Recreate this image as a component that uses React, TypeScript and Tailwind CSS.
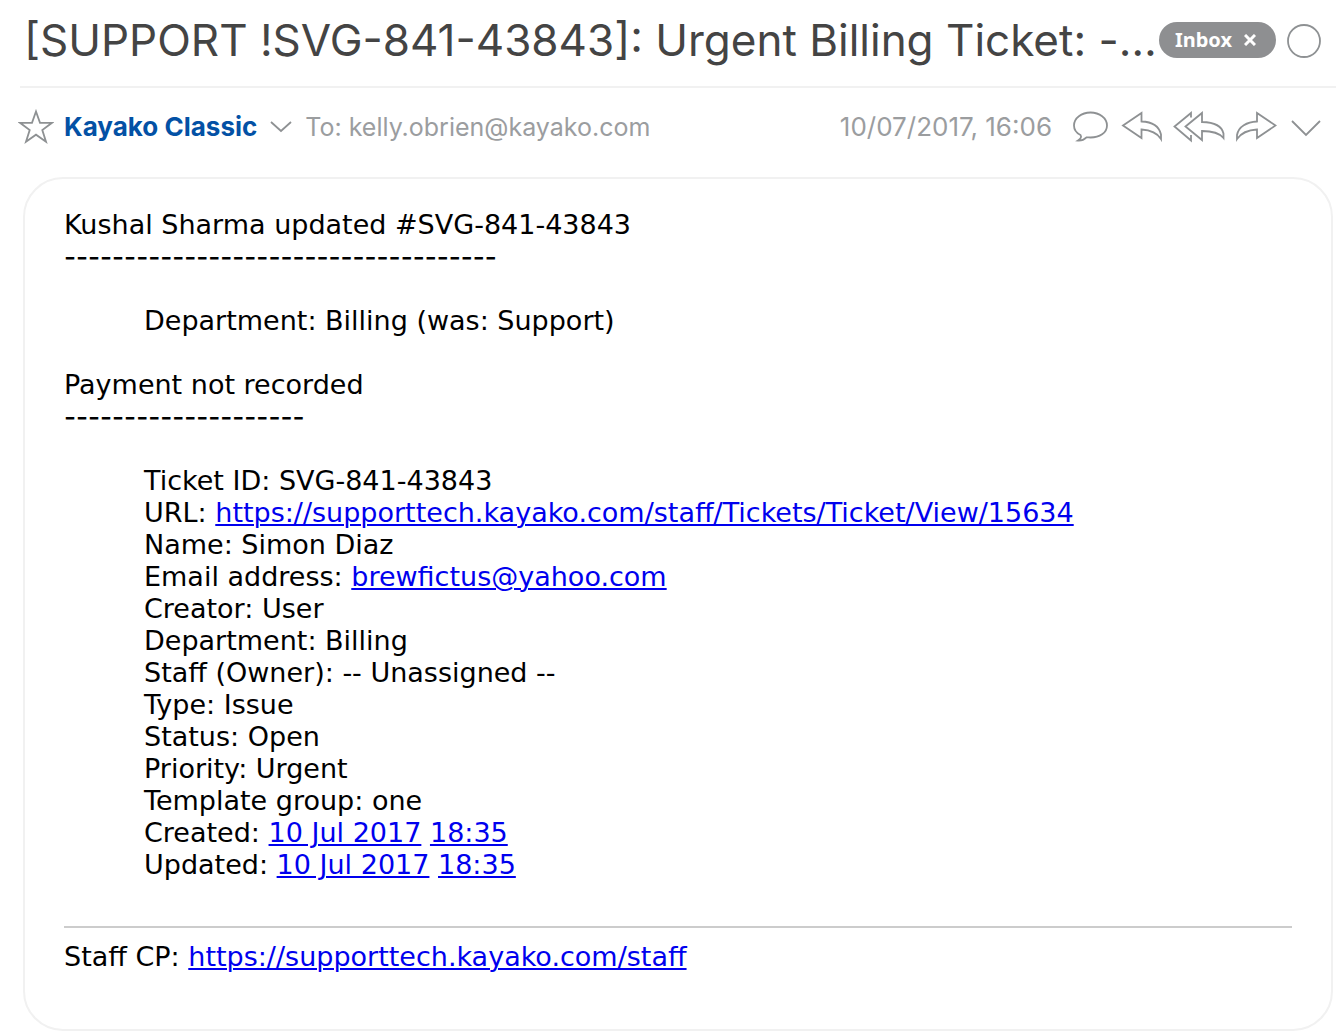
import React from 'react';

const ticketDetails = [
  { label: 'Ticket ID', value: 'SVG-841-43843' },
  { label: 'URL', links: ['https://supporttech.kayako.com/staff/Tickets/Ticket/View/15634'] },
  { label: 'Name', value: 'Simon Diaz' },
  { label: 'Email address', links: ['brewfictus@yahoo.com'] },
  { label: 'Creator', value: 'User' },
  { label: 'Department', value: 'Billing' },
  { label: 'Staff (Owner)', value: '-- Unassigned --' },
  { label: 'Type', value: 'Issue' },
  { label: 'Status', value: 'Open' },
  { label: 'Priority', value: 'Urgent' },
  { label: 'Template group', value: 'one' },
  { label: 'Created', links: ['10 Jul 2017', '18:35'] },
  { label: 'Updated', links: ['10 Jul 2017', '18:35'] },
];

const MailLink: React.FC<{ text: string }> = ({ text }) => {
  let href = '#';
  if (text.startsWith('http')) href = text;
  if (text.includes('@')) href = `mailto:${text}`;

  return (
    <a href={href} className="text-[#0000ee] underline decoration-2 underline-offset-2">
      {text}
    </a>
  );
};

const Dashes: React.FC<{ count: number }> = ({ count }) => (
  <p className="h-8 whitespace-nowrap font-['Inter',sans-serif] text-[26px] font-medium leading-8">
    {'-'.repeat(count)}
  </p>
);

const IconButton: React.FC<{ label: string; width: number; children: React.ReactNode }> = ({ label, width, children }) => (
  <button type="button" aria-label={label} className="shrink-0 text-[#8e9193]">
    <svg
      width={width}
      height={36}
      viewBox={`0 0 ${width} 36`}
      fill="none"
      stroke="currentColor"
      strokeWidth={1.8}
      className="block"
    >
      {children}
    </svg>
  </button>
);

const App: React.FC = () => {
  return (
    <div className="bg-white pb-1 font-['Inter',sans-serif]">
      {/* Subject */}
      <header className="ml-5 mr-1.5 flex h-22 items-center border-b-2 border-[#f1f1f1] pb-1.5 pl-1 pr-3.5">
        <h1 className="min-w-0 flex-1 truncate text-[44px] leading-[60px] text-[#444444]">
          [SUPPORT !SVG-841-43843]: Urgent Billing Ticket: -…
        </h1>
        <button
          type="button"
          className="mr-2.5 flex h-9 shrink-0 items-center gap-3 rounded-full bg-[#8e8f91] pl-4 pr-5 font-['Noto_Sans',sans-serif] text-[20px] font-bold leading-6 text-white"
        >
          Inbox
          <svg width="12" height="12" viewBox="0 0 12 12" stroke="currentColor" strokeWidth="3">
            <path d="M1 1l10 10M11 1L1 11" />
          </svg>
        </button>
        <IconButton label="Mark as done" width={36}>
          <circle cx="18" cy="19" r="16" />
        </IconButton>
      </header>

      {/* Sender and actions */}
      <div className="flex h-[78px] items-center pl-[18px] pr-[19px] text-[26px] leading-8 text-[#9b9d9f]">
        <IconButton label="Star" width={36}>
          <path d="M18 2.500l4 11.300h12l-9.700 7.200 3.700 11.800L18 25.700 8 32.800 11.700 21 2 13.800h12z" />
        </IconButton>
        <a href="mailto:classic@kayako.com" className="ml-2.5 font-bold text-[#0351a5]">
          Kayako Classic
        </a>
        <span className="ml-3 flex">
          <IconButton label="Sender details" width={24}>
            <path d="M2 13l10 9 10-9" />
          </IconButton>
        </span>
        <span className="ml-3 text-[25px]">To: kelly.obrien@kayako.com</span>
        <span className="ml-auto">10/07/2017, 16:06</span>
        <div className="ml-5 flex gap-2.5">
          <IconButton label="Comment" width={39}>
            <path d="M8.500 26C4.500 24 2 20.500 2 16.500 2 9 9.500 3.500 18.500 3.500S35 9 35 16.500 27.500 28.500 18.500 28.500c-1.500 0-2.500-.3-4-.2-2 2-4.500 3.500-8.500 3.200 2.500-1.500 4-3.500 2.500-5.500z" />
          </IconButton>
          <IconButton label="Reply" width={42}>
            <path d="M2 16.500L20.500 4v8.500c10 .3 17.500 4.500 19.500 13V30C36 23.500 29.500 21 20.500 20.500V29z" />
          </IconButton>
          <IconButton label="Reply all" width={52}>
            <path d="M18 8.500V4L1.500 17.500 18 31.500V26" />
            <path d="M12.500 17.500L29 4v9c12.500.3 20 4.500 21.500 11.500v4.500C46 23.500 39 22 29 22v9z" />
          </IconButton>
          <IconButton label="Forward" width={42}>
            <path d="M40.500 16.500L22 4v8.500C12 13 3.500 17.500 2 26v4C6.500 23.500 13 21 22 20.500V29z" />
          </IconButton>
          <IconButton label="More" width={36}>
            <path d="M5 12l14 14 14-14" />
          </IconButton>
        </div>
      </div>

      {/* Message */}
      <main className="ml-[23px] mr-[9px] mt-[11px] rounded-[40px] border-2 border-[#f1f1f1] px-[39px] pb-14 pt-[30px] font-['DejaVu_Sans',sans-serif] text-[27px] leading-8 text-black">
        <p>Kushal Sharma updated #SVG-841-43843</p>
        <Dashes count={36} />
        <p className="py-8 pl-20">Department: Billing (was: Support)</p>
        <p>Payment not recorded</p>
        <Dashes count={20} />
        <ul className="pl-20 pt-8">
          {ticketDetails.map((detail) => (
            <li key={detail.label}>
              {detail.label}: {detail.value}
              {detail.links?.map((link, index) => (
                <React.Fragment key={link}>
                  {index > 0 && ' '}
                  <MailLink text={link} />
                </React.Fragment>
              ))}
            </li>
          ))}
        </ul>
        <hr className="mb-[13px] mt-[45px] border-t-2 border-[#cccccc]" />
        <p>
          Staff CP: <MailLink text="https://supporttech.kayako.com/staff" />
        </p>
      </main>
    </div>
  );
};

export default App;
